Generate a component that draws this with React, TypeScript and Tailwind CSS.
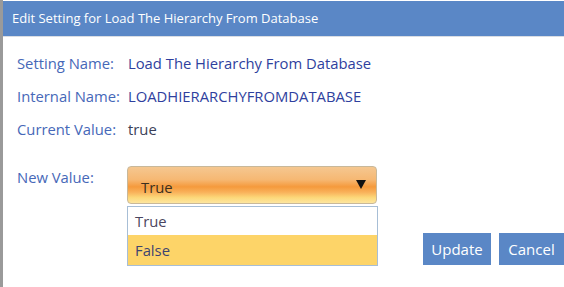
import React from 'react';

const labelCls = 'w-[111px] shrink-0 text-[#4668b8]';

function Row({ label, value, valueCls }: { label: string; value: string; valueCls?: string }) {
  return (
    <div className="flex h-[33px] items-center">
      <span className={labelCls}>{label}</span>
      <span className={valueCls ?? 'text-[#2f3f9e]'}>{value}</span>
    </div>
  );
}

export default function App() {
  return (
    <div
      className="flex h-[287px] w-[564px] overflow-hidden bg-[#9a9a9a]"
      style={{ fontFamily: '"Open Sans", "Noto Sans", sans-serif' }}
    >
      <div className="ml-[3px] flex flex-1 flex-col bg-white">
        <div className="mt-px flex h-[36px] items-center border-b border-[#d9dde3] bg-[#5a87c6] pl-[9px] text-[13px] text-white">
          Edit Setting for Load The Hierarchy From Database
        </div>
        <div className="flex flex-1 flex-col pl-[14px] pt-[10px] text-[14.8px]">
          <Row label="Setting Name:" value="Load The Hierarchy From Database" />
          <Row label="Internal Name:" value="LOADHIERARCHYFROMDATABASE" />
          <Row label="Current Value:" value="true" valueCls="text-[#3a3f58]" />

          <div className="mt-[19px] flex">
            <span className={`${labelCls} pt-[1px]`}>New Value:</span>
            <div className="-ml-px mt-[1px] flex flex-col">
              <div className="flex h-[38px] w-[250px] items-center justify-between rounded-[4px] border border-[#c8b89a] bg-[linear-gradient(to_bottom,#f5c790_0%,#f6b873_35%,#f59a3c_55%,#f9b15a_70%,#fcd87a_85%,#fde6a0_100%)] pl-[13px] pr-[10px]">
                <span className="pt-[4px] text-[#3b3020]">True</span>
                <svg width="10" height="9" viewBox="0 0 10 9" className="mb-[2px]">
                  <path d="M0 0h10L5 9z" fill="#111" />
                </svg>
              </div>
              <div className="mt-[2px] flex w-[251px] flex-col border border-[#a7bed6]">
                <div className="flex h-[28px] items-center bg-white pl-[7px] text-[#4a4560]">True</div>
                <div className="flex h-[30px] items-center bg-[#fdd468] pl-[7px] text-[#3d4470]">False</div>
              </div>
            </div>
            <div className="ml-[45px] mt-[68px] flex gap-[8px] self-start">
              <button className="h-[32px] w-[68px] bg-[#5a87c6] text-[15px] text-white">Update</button>
              <button className="h-[32px] w-[65px] bg-[#5a87c6] text-[15px] text-white">Cancel</button>
            </div>
          </div>
        </div>
      </div>
    </div>
  );
}
